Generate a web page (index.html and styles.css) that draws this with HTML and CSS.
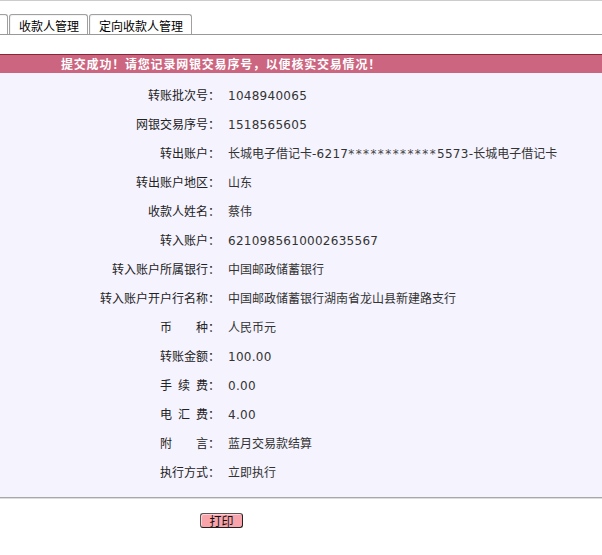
FILE: index.html
```html
<!DOCTYPE html>
<html lang="zh-CN">
<head>
<meta charset="utf-8">
<title>转账结果</title>
<link rel="stylesheet" href="styles.css">
</head>
<body>
<div class="tabs">
  <div class="tab tab-cut"></div>
  <div class="tab">收款人管理</div>
  <div class="tab">定向收款人管理</div>
</div>

<div class="banner">提交成功！请您记录网银交易序号，以便核实交易情况！</div>

<div class="detail">
  <div class="label">转账批次号：</div><div class="value num">1048940065</div>
  <div class="label">网银交易序号：</div><div class="value num">1518565605</div>
  <div class="label">转出账户：</div><div class="value">长城电子借记卡<span class="num">-6217</span><span class="mask">************</span><span class="num">5573-</span>长城电子借记卡</div>
  <div class="label">转出账户地区：</div><div class="value">山东</div>
  <div class="label">收款人姓名：</div><div class="value">蔡伟</div>
  <div class="label">转入账户：</div><div class="value num">6210985610002635567</div>
  <div class="label">转入账户所属银行：</div><div class="value">中国邮政储蓄银行</div>
  <div class="label">转入账户开户行名称：</div><div class="value">中国邮政储蓄银行湖南省龙山县新建路支行</div>
  <div class="label">币&emsp;&emsp;种：</div><div class="value">人民币元</div>
  <div class="label">转账金额：</div><div class="value num">100.00</div>
  <div class="label">手&ensp;续&ensp;费：</div><div class="value num">0.00</div>
  <div class="label">电&ensp;汇&ensp;费：</div><div class="value num">4.00</div>
  <div class="label">附&emsp;&emsp;言：</div><div class="value">蓝月交易款结算</div>
  <div class="label">执行方式：</div><div class="value">立即执行</div>
</div>

<div class="actions">
  <button class="print-btn" type="button">打印</button>
</div>
</body>
</html>
```

FILE: styles.css
```css
html, body {
  margin: 0;
  padding: 0;
  background: #ffffff;
}

body {
  border-top: 1px solid #cccccc;
  font-family: "DejaVu Sans", "Noto Sans CJK SC", sans-serif;
  font-size: 12px;
  color: #222222;
  overflow: hidden;
}

.tabs {
  display: flex;
  gap: 1px;
  margin-top: 13px;
  border-bottom: 1px solid #999999;
  height: 20px;
}

.tab {
  box-sizing: border-box;
  height: 20px;
  line-height: 18px;
  padding: 2px 8px 0 9px;
  border: 1px solid #a0a0a0;
  border-bottom: none;
  border-radius: 3px 3px 0 0;
  box-shadow: inset 1px 1px 0 #f4f4f4;
  background: #ffffff;
  color: #000000;
  font-family: "Noto Sans CJK SC", sans-serif;
  font-size: 12px;
  white-space: nowrap;
}

.tab-cut {
  width: 21px;
  margin-left: -13px;
  padding: 0;
}

.banner {
  margin-top: 19px;
  border-top: 1px solid #8a2438;
  background: #cc6680;
  height: 18px;
  line-height: 18px;
  padding-left: 61px;
  color: #ffffff;
  font-family: "Noto Sans CJK SC", sans-serif;
  font-weight: bold;
  font-size: 12px;
  letter-spacing: 0.8px;
  white-space: nowrap;
}

.detail {
  display: grid;
  grid-template-columns: 220px 1fr;
  grid-auto-rows: 29px;
  column-gap: 8px;
  align-items: center;
  background: #f5f3fe;
  padding: 8px 0 10px;
  border-bottom: 1px solid #a8a8a8;
  box-shadow: 0 1px 0 #dddddd;
}

.label {
  text-align: right;
  white-space: nowrap;
  line-height: 16px;
  color: #222222;
}

.value {
  white-space: nowrap;
  line-height: 16px;
  color: #333333;
}

.num {
  letter-spacing: 0.27px;
}

.mask {
  letter-spacing: 1.4px;
  color: #444444;
}

.actions {
  padding: 15px 0 0 200px;
}

.print-btn {
  box-sizing: border-box;
  width: 43px;
  height: 15px;
  padding: 0;
  margin: 0;
  border: 1px solid #555555;
  border-right-color: #222222;
  border-bottom-color: #222222;
  border-radius: 3px;
  background: #f9a3ab;
  box-shadow: inset 1px 1px 0 #fcd0d4;
  color: #111111;
  font-family: "Noto Sans CJK SC", sans-serif;
  font-size: 12px;
  line-height: 13px;
  display: block;
  cursor: pointer;
}
```
